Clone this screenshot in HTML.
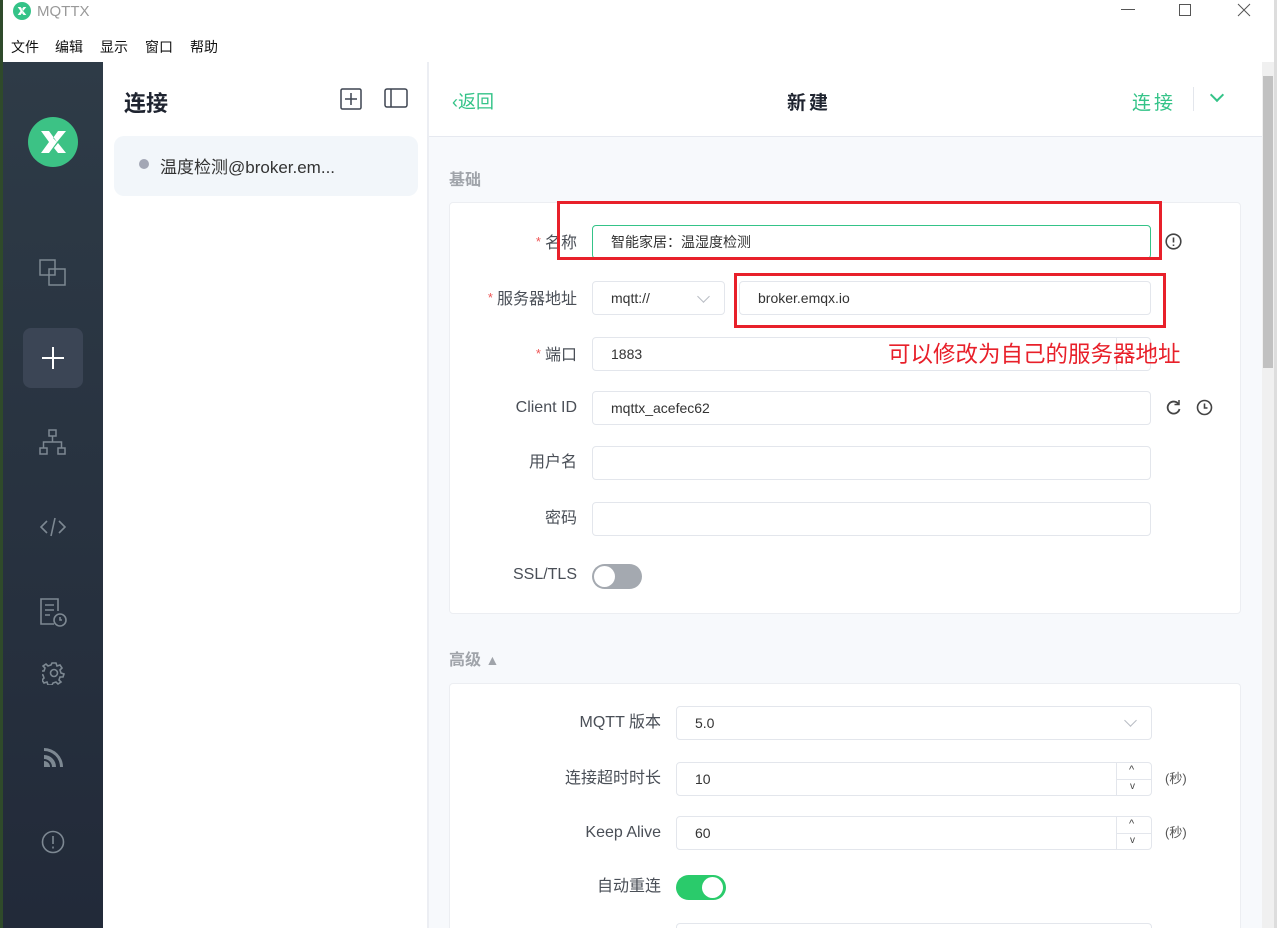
<!DOCTYPE html>
<html style="width:1277px;height:928px;overflow:hidden"><head><meta charset="utf-8"><style>
*{box-sizing:border-box;margin:0;padding:0}
body{width:1277px;height:928px;overflow:hidden;position:relative;background:#fff;font-family:"Liberation Sans","Noto Sans CJK SC",sans-serif;color:#333}
.a{position:absolute}
.lbl{position:absolute;font-size:16px;color:#4a4f57;text-align:right;line-height:20px}
.lbl i{color:#e55;font-style:normal;font-size:13px;margin-right:4px;vertical-align:2px}
.inp{position:absolute;height:34px;border:1px solid #e3e6ec;border-radius:4px;background:#fff;font-size:14px;color:#333;line-height:32px;padding-left:18px}
.chev{position:absolute;width:9px;height:9px;border-right:1.5px solid #b8bcc4;border-bottom:1.5px solid #b8bcc4;transform:rotate(45deg)}
.m{position:absolute;top:37px;font-size:14px;color:#111}
</style></head><body>
<div class="a" style="left:0;top:0;width:3px;height:928px;background:#2f4a2a"></div>
<div class="a" style="left:1274px;top:0;width:3px;height:928px;background:#ddd"></div>
<svg class="a" style="left:13px;top:2px" width="18" height="18" viewBox="0 0 50 50"><circle cx="25" cy="25" r="25" fill="#34c388"/><path d="M13 14l8 0 8 11-8 11-8 0 8-11zM37 14l-8 0-5 7 4 4zM37 36l-8 0-4-5 4-5z" fill="#fff"/></svg>
<div class="a" style="left:37px;top:3px;font-size:15px;color:#999">MQTTX</div>
<div class="a" style="left:1121px;top:9px;width:14px;height:1px;background:#555"></div>
<div class="a" style="left:1179px;top:4px;width:12px;height:12px;border:1px solid #555"></div>
<svg class="a" style="left:1237px;top:3px" width="14" height="14"><path d="M1 1l12 12M13 1L1 13" stroke="#555" stroke-width="1"/></svg>
<div class="m" style="left:11px">文件</div><div class="m" style="left:55px">编辑</div><div class="m" style="left:100px">显示</div><div class="m" style="left:145px">窗口</div><div class="m" style="left:190px">帮助</div>
<div class="a" style="left:3px;top:62px;width:100px;height:866px;background:linear-gradient(#2e3b47,#222a39)"></div>
<svg class="a" style="left:28px;top:117px" width="50" height="50" viewBox="0 0 50 50"><circle cx="25" cy="25" r="25" fill="#3cc285"/><path d="M13 14l8 0 8 11-8 11-8 0 8-11zM38 14l-8 0-5 7 4 4zM38 36l-8 0-4-5 4-5z" fill="#fff"/></svg>
<svg class="a" style="left:39px;top:259px" width="28" height="28"><rect x="1" y="1" width="15" height="15" fill="none" stroke="#7d8892" stroke-width="1.5"/><rect x="10" y="10" width="16" height="16" fill="none" stroke="#7d8892" stroke-width="1.5"/></svg>
<div class="a" style="left:23px;top:328px;width:60px;height:60px;border-radius:8px;background:#3b4555"></div>
<svg class="a" style="left:41px;top:346px" width="24" height="24"><path d="M12 1v22M1 12h22" stroke="#fff" stroke-width="2"/></svg>
<svg class="a" style="left:39px;top:429px" width="28" height="28" fill="none" stroke="#7d8892" stroke-width="1.5"><rect x="10" y="1" width="7" height="6"/><rect x="1" y="19" width="7" height="6"/><rect x="19" y="19" width="7" height="6"/><path d="M13.5 7v6M4.5 19v-6h18v6"/></svg>
<svg class="a" style="left:39px;top:516px" width="28" height="22" fill="none" stroke="#7d8892" stroke-width="1.6"><path d="M8 5l-6 6 6 6M20 5l6 6-6 6M16 2l-4 18"/></svg>
<svg class="a" style="left:40px;top:598px" width="28" height="30" fill="none" stroke="#7d8892" stroke-width="1.6"><path d="M14 26H1V1h17v12"/><path d="M5 7h9M5 12h9M5 17h5"/><circle cx="20" cy="22" r="6"/><path d="M20 19v3h2"/></svg>
<svg class="a" style="left:42px;top:661px" width="24" height="24" fill="none" stroke="#7d8892" stroke-width="1.6"><circle cx="12" cy="12" r="3.5"/><path d="M10 2h4l1 3 3-1 2 3-2 2 1 3 3 1v0l-1 3-3 0-1 3 2 2-3 2-2-2-3 1-1 2h-4l-1-3-3 1-2-3 2-2-1-3-3-1 1-3 3 0 1-3-2-2 3-2 2 2 3-1z"/></svg>
<svg class="a" style="left:43px;top:747px" width="22" height="20" fill="#7d8892"><path d="M1 8a12 12 0 0 1 12 12H9a8 8 0 0 0-8-8zM1 1a19 19 0 0 1 19 19h-3A16 16 0 0 0 1 4zM1 14a6 6 0 0 1 6 6H1z"/></svg>
<svg class="a" style="left:41px;top:830px" width="24" height="24" fill="none" stroke="#7d8892" stroke-width="1.6"><circle cx="12" cy="12" r="10.5"/><path d="M12 6v8M12 16.5v2"/></svg>
<div class="a" style="left:124px;top:86px;font-size:22px;font-weight:bold;color:#1f2430">连接</div>
<svg class="a" style="left:340px;top:88px" width="22" height="22" fill="none" stroke="#3d4450" stroke-width="1.5"><rect x="1" y="1" width="20" height="20" rx="1.5"/><path d="M11 5v12M5 11h12"/></svg>
<svg class="a" style="left:384px;top:88px" width="24" height="20" fill="none" stroke="#3d4450" stroke-width="1.5"><rect x="1" y="1" width="22" height="18" rx="2"/><path d="M7 1v18"/></svg>
<div class="a" style="left:114px;top:136px;width:304px;height:60px;border-radius:10px;background:#f2f6fa"></div>
<div class="a" style="left:139px;top:159px;width:10px;height:10px;border-radius:50%;background:#a3a7b5"></div>
<div class="a" style="left:160px;top:153px;font-size:17px;color:#333">温度检测@broker.em...</div>
<div class="a" style="left:427px;top:62px;width:2px;height:866px;background:#eceef3"></div>
<div class="a" style="left:429px;top:136px;width:833px;height:792px;background:#f7f9fc;border-top:1px solid #e6e9f0;overflow:hidden">
<div class="a" style="left:20px;top:65px;width:792px;height:412px;background:#fff;border:1px solid #eceef2;border-radius:4px"></div>
<div class="a" style="left:20px;top:546px;width:792px;height:246px;background:#fff;border:1px solid #eceef2;border-bottom:0;border-radius:4px 4px 0 0"></div>
<div class="a" style="left:247px;top:786px;width:476px;height:6px;border:1px solid #e3e6ec;border-bottom:0;border-radius:4px 4px 0 0;background:#fff"></div>
</div>
<div class="a" style="left:452px;top:88px;font-size:18px;color:#34c388">&#8249;返回</div>
<div class="a" style="left:787px;top:88px;font-size:19px;font-weight:bold;color:#1f2430;letter-spacing:3px">新建</div>
<div class="a" style="left:1132px;top:88px;font-size:19px;color:#34c388;letter-spacing:3px">连接</div>
<div class="a" style="left:1193px;top:87px;width:1px;height:24px;background:#e3e6ec"></div>
<div class="a" style="left:1212px;top:90px;width:10px;height:10px;border-right:2px solid #34c388;border-bottom:2px solid #34c388;transform:rotate(45deg)"></div>
<div class="a" style="left:1262px;top:62px;width:12px;height:866px;background:#f0f0f0"></div>
<div class="a" style="left:1263px;top:76px;width:10px;height:292px;background:#c1c1c1"></div>
<div class="a" style="left:449px;top:166px;font-size:16px;font-weight:bold;color:#a0a4aa">基础</div>
<div class="lbl" style="left:450px;top:232px;width:127px"><i>*</i>名称</div>
<div class="inp" style="left:592px;top:225px;width:559px;border-color:#34c388">智能家居：温湿度检测</div>
<svg class="a" style="left:1165px;top:233px" width="17" height="17" fill="none" stroke="#444" stroke-width="1.6"><circle cx="8.5" cy="8.5" r="7.3"/><path d="M8.5 4.5v5M8.5 11.5v1.5"/></svg>
<div class="lbl" style="left:450px;top:288px;width:127px"><i>*</i>服务器地址</div>
<div class="inp" style="left:592px;top:281px;width:133px">mqtt://</div>
<div class="chev" style="left:699px;top:292px"></div>
<div class="inp" style="left:739px;top:281px;width:412px">broker.emqx.io</div>
<div class="lbl" style="left:450px;top:344px;width:127px"><i>*</i>端口</div>
<div class="inp" style="left:592px;top:337px;width:559px">1883</div>
<div class="a" style="left:1116px;top:338px;width:1px;height:32px;background:#e3e6ec"></div>
<div class="lbl" style="left:450px;top:398px;width:127px">Client ID</div>
<div class="inp" style="left:592px;top:391px;width:559px">mqttx_acefec62</div>
<svg class="a" style="left:1165px;top:399px" width="17" height="17" fill="none" stroke="#444" stroke-width="1.8"><path d="M13.5 5A6 6 0 1 0 14.5 10"/><path d="M14 1v4.5H9.5" stroke-width="1.5"/></svg>
<svg class="a" style="left:1196px;top:399px" width="17" height="17" fill="none" stroke="#444" stroke-width="1.6"><circle cx="8.5" cy="8.5" r="7"/><path d="M8.5 4.5v4.5h3"/></svg>
<div class="lbl" style="left:450px;top:453px;width:127px">用户名</div>
<div class="inp" style="left:592px;top:446px;width:559px"></div>
<div class="lbl" style="left:450px;top:509px;width:127px">密码</div>
<div class="inp" style="left:592px;top:502px;width:559px"></div>
<div class="lbl" style="left:450px;top:565px;width:127px">SSL/TLS</div>
<div class="a" style="left:592px;top:564px;width:50px;height:25px;border-radius:13px;background:#a4a9b0"></div>
<div class="a" style="left:594px;top:566px;width:21px;height:21px;border-radius:50%;background:#fff"></div>
<div class="a" style="left:557px;top:201px;width:605px;height:59px;border:3px solid #e8202a"></div>
<div class="a" style="left:734px;top:273px;width:432px;height:55px;border:3px solid #e8202a"></div>
<div class="a" style="left:888px;top:337px;font-size:22.5px;color:#e8202a;white-space:nowrap">可以修改为自己的服务器地址</div>
<div class="a" style="left:449px;top:646px;font-size:16px;font-weight:bold;color:#a0a4aa">高级 <span style="font-size:14px;color:#a0a4aa">▲</span></div>
<div class="lbl" style="left:460px;top:713px;width:201px">MQTT 版本</div>
<div class="inp" style="left:676px;top:706px;width:476px">5.0</div>
<div class="chev" style="left:1126px;top:716px"></div>
<div class="lbl" style="left:460px;top:769px;width:201px">连接超时时长</div>
<div class="inp" style="left:676px;top:762px;width:476px">10</div>
<div class="a" style="left:1116px;top:763px;width:1px;height:32px;background:#e3e6ec"></div>
<div class="a" style="left:1117px;top:779px;width:34px;height:1px;background:#e3e6ec"></div>
<div class="a" style="left:1129px;top:764px;font-size:11px;color:#444">^</div>
<div class="a" style="left:1130px;top:781px;font-size:10px;color:#444">v</div>
<div class="a" style="left:1165px;top:768px;font-size:13px;color:#555">(秒)</div>
<div class="lbl" style="left:460px;top:823px;width:201px">Keep Alive</div>
<div class="inp" style="left:676px;top:816px;width:476px">60</div>
<div class="a" style="left:1116px;top:817px;width:1px;height:32px;background:#e3e6ec"></div>
<div class="a" style="left:1117px;top:833px;width:34px;height:1px;background:#e3e6ec"></div>
<div class="a" style="left:1129px;top:818px;font-size:11px;color:#444">^</div>
<div class="a" style="left:1130px;top:835px;font-size:10px;color:#444">v</div>
<div class="a" style="left:1165px;top:822px;font-size:13px;color:#555">(秒)</div>
<div class="lbl" style="left:460px;top:877px;width:201px">自动重连</div>
<div class="a" style="left:676px;top:875px;width:50px;height:25px;border-radius:13px;background:#2acb6b"></div>
<div class="a" style="left:702px;top:877px;width:21px;height:21px;border-radius:50%;background:#fff"></div>
</body></html>
